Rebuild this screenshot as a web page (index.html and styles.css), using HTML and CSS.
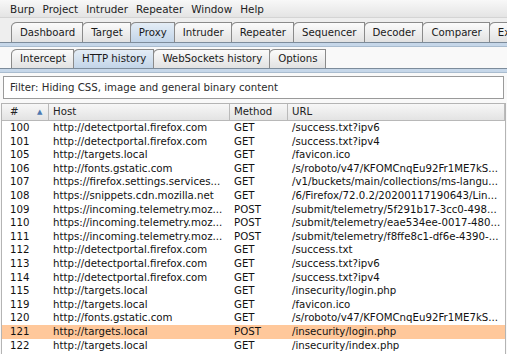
FILE: index.html
```html
<!DOCTYPE html>
<html>
<head>
<meta charset="utf-8">
<link rel="stylesheet" href="styles.css">
</head>
<body>
<div class="menubar">
  <span class="menu">Burp</span><span class="menu">Project</span><span class="menu">Intruder</span><span class="menu">Repeater</span><span class="menu">Window</span><span class="menu">Help</span>
</div>
<div class="tabs tabs1">
  <div class="tab first">Dashboard</div>
  <div class="tab">Target</div>
  <div class="tab sel">Proxy</div>
  <div class="tab">Intruder</div>
  <div class="tab">Repeater</div>
  <div class="tab">Sequencer</div>
  <div class="tab">Decoder</div>
  <div class="tab">Comparer</div>
  <div class="tab">Extender</div>
</div>
<div class="panel">
  <div class="band"></div>
  <div class="tabs tabs2">
    <div class="tab first">Intercept</div>
    <div class="tab sel">HTTP history</div>
    <div class="tab">WebSockets history</div>
    <div class="tab">Options</div>
  </div>
  <div class="band"></div>
  <div class="content">
    <div class="filter">Filter: Hiding CSS, image and general binary content</div>
    <div class="table">
      <div class="row head">
        <div class="c c1">#<span class="arrow">&#9650;</span></div>
        <div class="c c2">Host</div>
        <div class="c c3">Method</div>
        <div class="c c4">URL</div>
      </div>
      <div class="row"><div class="c c1">100</div><div class="c c2">http://detectportal.firefox.com</div><div class="c c3">GET</div><div class="c c4">/success.txt?ipv6</div></div>
      <div class="row"><div class="c c1">101</div><div class="c c2">http://detectportal.firefox.com</div><div class="c c3">GET</div><div class="c c4">/success.txt?ipv4</div></div>
      <div class="row"><div class="c c1">105</div><div class="c c2">http://targets.local</div><div class="c c3">GET</div><div class="c c4">/favicon.ico</div></div>
      <div class="row"><div class="c c1">106</div><div class="c c2">http://fonts.gstatic.com</div><div class="c c3">GET</div><div class="c c4">/s/roboto/v47/KFOMCnqEu92Fr1ME7kS...</div></div>
      <div class="row"><div class="c c1">107</div><div class="c c2">https://firefox.settings.services...</div><div class="c c3">GET</div><div class="c c4">/v1/buckets/main/collections/ms-langu...</div></div>
      <div class="row"><div class="c c1">108</div><div class="c c2">https://snippets.cdn.mozilla.net</div><div class="c c3">GET</div><div class="c c4">/6/Firefox/72.0.2/20200117190643/Lin...</div></div>
      <div class="row"><div class="c c1">109</div><div class="c c2">https://incoming.telemetry.moz...</div><div class="c c3">POST</div><div class="c c4">/submit/telemetry/5f291b17-3cc0-498...</div></div>
      <div class="row"><div class="c c1">110</div><div class="c c2">https://incoming.telemetry.moz...</div><div class="c c3">POST</div><div class="c c4">/submit/telemetry/eae534ee-0017-480...</div></div>
      <div class="row"><div class="c c1">111</div><div class="c c2">https://incoming.telemetry.moz...</div><div class="c c3">POST</div><div class="c c4">/submit/telemetry/f8ffe8c1-df6e-4390-...</div></div>
      <div class="row"><div class="c c1">112</div><div class="c c2">http://detectportal.firefox.com</div><div class="c c3">GET</div><div class="c c4">/success.txt</div></div>
      <div class="row"><div class="c c1">113</div><div class="c c2">http://detectportal.firefox.com</div><div class="c c3">GET</div><div class="c c4">/success.txt?ipv6</div></div>
      <div class="row"><div class="c c1">114</div><div class="c c2">http://detectportal.firefox.com</div><div class="c c3">GET</div><div class="c c4">/success.txt?ipv4</div></div>
      <div class="row"><div class="c c1">115</div><div class="c c2">http://targets.local</div><div class="c c3">GET</div><div class="c c4">/insecurity/login.php</div></div>
      <div class="row"><div class="c c1">119</div><div class="c c2">http://targets.local</div><div class="c c3">GET</div><div class="c c4">/favicon.ico</div></div>
      <div class="row"><div class="c c1">120</div><div class="c c2">http://fonts.gstatic.com</div><div class="c c3">GET</div><div class="c c4">/s/roboto/v47/KFOMCnqEu92Fr1ME7kS...</div></div>
      <div class="row selrow"><div class="c c1">121</div><div class="c c2">http://targets.local</div><div class="c c3">POST</div><div class="c c4">/insecurity/login.php</div></div>
      <div class="row"><div class="c c1">122</div><div class="c c2">http://targets.local</div><div class="c c3">GET</div><div class="c c4">/insecurity/index.php</div></div>
    </div>
  </div>
</div>
</body>
</html>
```
FILE: styles.css
```css
html, body {
  margin: 0;
  padding: 0;
}
body {
  width: 507px;
  height: 354px;
  overflow: hidden;
  background: #eeeeee;
  font-family: "DejaVu Sans", sans-serif;
  font-size: 10.2px;
  color: #111;
}
.menubar {
  height: 17px;
  display: flex;
  align-items: center;
  padding-left: 6px;
  background: linear-gradient(#f8f8f8, #e4e4e4);
  border-bottom: 1px solid #d4d4d4;
  font-size: 10.4px;
  color: #222;
}
.menu {
  padding: 0 4px;
}
.tabs {
  display: flex;
  padding-left: 11px;
  white-space: nowrap;
}
.tabs1 {
  margin-top: 4px;
  height: 20px;
}
.tab {
  box-sizing: border-box;
  height: 20px;
  padding: 0 7px 0 8px;
  line-height: 19px;
  border: 1px solid #8a8a8a;
  border-bottom: none;
  border-top-left-radius: 6px 5px;
  margin-left: -1px;
  background: linear-gradient(#fbfbfb, #e2e2e2);
  color: #1a1a1a;
  position: relative;
}
.tab.first {
  margin-left: 0;
}
.tab.sel {
  background: linear-gradient(#e4edf6, #c3d5e8);
}
.panel {
  background: #f9f9f9;
  height: 312px;
}
.band {
  height: 3px;
  border-top: 1px solid #7d8c9b;
  border-bottom: 1px solid #a9bccf;
  background: #c6d7e9;
}
.tabs2 {
  margin-top: 2px;
  height: 19px;
}
.tabs2 .tab {
  height: 19px;
  line-height: 18px;
}
.content {
  padding: 3px 1px 0 1px;
}
.filter {
  margin: 0 2px 0 2px;
  height: 21px;
  line-height: 21px;
  padding-left: 6px;
  border: 1px solid #9a9a9a;
  background: #ffffff;
  color: #2a2a2a;
}
.table {
  margin-top: 4px;
  border: 1px solid #b4b4b4;
  border-bottom: none;
  background: #ffffff;
  height: 260px;
}
.row {
  display: flex;
  height: 13.6px;
  line-height: 13.6px;
  white-space: nowrap;
}
.row.head {
  height: 16px;
  line-height: 16px;
  background: linear-gradient(#f7f7f7, #e3e3e3);
  border-bottom: 1px solid #b8b8b8;
}
.c {
  box-sizing: border-box;
  overflow: hidden;
  padding-left: 4px;
}
.c1 {
  width: 47px;
  padding-left: 8px;
  position: relative;
}
.c2 { width: 181px; }
.c3 { width: 58px; }
.c4 { flex: 1; }
.head .c {
  border-right: 1px solid #bababa;
  color: #222;
}
.head .c2, .head .c3, .head .c4 {
  padding-left: 4px;
}
.arrow {
  position: absolute;
  left: 35px;
  top: 0;
  font-size: 7px;
  color: #4d79b0;
}
.selrow {
  background: #ffc89b;
}
```
